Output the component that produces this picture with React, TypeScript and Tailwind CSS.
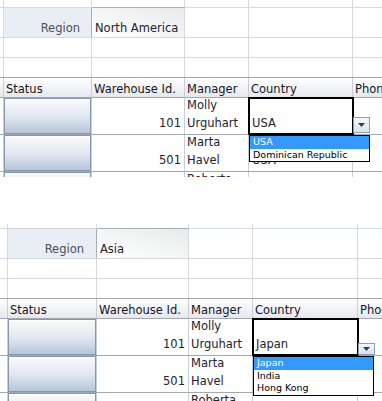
import React from "react";

type Cols = [string, string, string, string, string];

const LIGHT = "border-[#d4d9e2]";
const MID = "border-[#c8cdd6]";
const DARK = "border-[#a3a8af]";

function BlankRow({ cols, h, line }: { cols: Cols; h: string; line: string }) {
  return (
    <div className={`flex shrink-0 border-b ${line} ${h}`}>
      {cols.map((w, i) => (
        <div key={i} className={`${w} shrink-0 border-r ${LIGHT}`} />
      ))}
      <div className="flex-1" />
    </div>
  );
}

function DataRow({
  cols,
  id,
  manager,
  country,
  children,
}: {
  cols: Cols;
  id: string;
  manager: string[];
  country: string;
  children?: React.ReactNode;
}) {
  const [c0, c1, c2, c3, c4] = cols;
  return (
    <div className={`flex h-[37px] shrink-0 border-b ${DARK} leading-[18px]`}>
      <div className={`${c0} shrink-0 border-r ${MID}`} />
      <div className={`${c1} shrink-0 border-r ${MID}`}>
        <div className="h-full border border-[#8797ae] bg-linear-to-b from-[#f9fafc] via-[#e3e8f0] to-[#b6c5db] shadow-[inset_0_1px_0_#ffffff]" />
      </div>
      <div className={`${c2} shrink-0 border-r ${MID} flex items-end justify-end pr-[3px] pb-[2px]`}>{id}</div>
      <div className={`${c3} shrink-0 border-r ${MID} flex flex-col justify-end pl-[2px] pb-[2px] whitespace-nowrap overflow-hidden`}>
        {manager.map((m) => (
          <span key={m}>{m}</span>
        ))}
      </div>
      <div className={`${c4} shrink-0 border-r ${MID} relative flex items-end pl-[3px] pb-[2px]`}>
        {country}
        {children}
      </div>
      <div className="flex-1" />
    </div>
  );
}

function Panel({
  cols,
  lead,
  labelPad,
  region,
  country,
  options,
  btn,
}: {
  cols: Cols;
  lead: string;
  labelPad: string;
  region: string;
  country: string;
  options: string[];
  btn: string;
}) {
  const [c0, c1, c2, c3, c4] = cols;
  const head = ["Status", "Warehouse Id.", "Manager", "Country"];
  return (
    <div className="relative flex h-[177px] flex-col overflow-hidden">
      <BlankRow cols={cols} h={lead} line={LIGHT} />

      {/* region filter */}
      <div className={`flex h-[30px] shrink-0 border-b ${LIGHT} leading-[14px]`}>
        <div className={`${c0} shrink-0 border-r ${LIGHT}`} />
        <div className={`${c1} shrink-0 border-r border-[#a7aeb8] bg-[#e9edf4] flex items-end justify-end ${labelPad} pb-[2px] text-[#4b4f5c]`}>
          Region
        </div>
        <div className={`${c2} shrink-0 -mt-px border-t border-t-[#a7aeb8] border-r ${LIGHT} bg-linear-to-bl from-[#e8eaea] to-white flex items-end pl-[3px] pb-[2px] whitespace-nowrap`}>
          {region}
        </div>
        <div className={`${c3} shrink-0 border-r ${LIGHT}`} />
        <div className={`${c4} shrink-0 border-r ${LIGHT}`} />
        <div className="flex-1" />
      </div>

      <BlankRow cols={cols} h="h-[20px]" line={LIGHT} />
      <BlankRow cols={cols} h="h-[20px]" line={DARK} />

      {/* column headers */}
      <div className={`flex h-[20px] shrink-0 border-b ${DARK} bg-linear-to-b from-white to-[#e5e8ee] leading-[14px] text-[#14171f]`}>
        <div className={`${c0} shrink-0 border-r ${MID}`} />
        {[c1, c2, c3, c4].map((w, i) => (
          <div key={i} className={`${w} shrink-0 border-r ${MID} flex items-end pl-[2px] pb-px whitespace-nowrap`}>
            {head[i]}
          </div>
        ))}
        <div className="flex-1 flex items-end pl-[2px] pb-px whitespace-nowrap overflow-hidden">Phone</div>
      </div>

      <DataRow cols={cols} id="101" manager={["Molly", "Urguhart"]} country="">
        <div className="absolute -left-px -top-px z-10 flex h-[38px] w-[calc(100%+3px)] items-end border-2 border-black bg-white pl-[2px] pb-px">
          {country}
        </div>
        <div className={`absolute left-[calc(100%+1px)] z-10 flex w-[17px] items-center justify-center border border-[#8e9db4] bg-linear-to-b from-[#f6f8fb] to-[#dce2eb] ${btn}`}>
          <svg width="7" height="4" viewBox="0 0 7 4">
            <path d="M0 0h7L3.5 4z" fill="#25406e" />
          </svg>
        </div>
        <div className="absolute left-0 top-[calc(100%+1px)] z-20 w-[121px] border border-black bg-white text-[9.5px] leading-[12.5px] text-black">
          {options.map((o, i) => (
            <div key={o} className={`h-[12.5px] pl-[3px] whitespace-nowrap ${i === 0 ? "bg-[#3399ff] text-white" : ""}`}>
              {o}
            </div>
          ))}
        </div>
      </DataRow>
      <DataRow cols={cols} id="501" manager={["Marta", "Havel"]} country={country} />
      <DataRow cols={cols} id="302" manager={["Roberta", "Ruiz"]} country={country} />
    </div>
  );
}

export default function App() {
  return (
    <div className="h-[401px] w-[382px] overflow-hidden bg-white font-['DejaVu_Sans',sans-serif] text-[11.5px] text-[#1e2230]">
      <Panel
        cols={["w-[4px]", "w-[88px]", "w-[93px]", "w-[64px]", "w-[104px]"]}
        lead="h-[8px]"
        labelPad="pr-[11px]"
        region="North America"
        country="USA"
        options={["USA", "Dominican Republic"]}
        btn="top-[19px] h-[16px]"
      />
      <div className="h-[47px]" />
      <Panel
        cols={["w-[8px]", "w-[89px]", "w-[92px]", "w-[64px]", "w-[105px]"]}
        lead="h-[5px]"
        labelPad="pr-[12px]"
        region="Asia"
        country="Japan"
        options={["Japan", "India", "Hong Kong"]}
        btn="top-[24px] h-[12px]"
      />
    </div>
  );
}
